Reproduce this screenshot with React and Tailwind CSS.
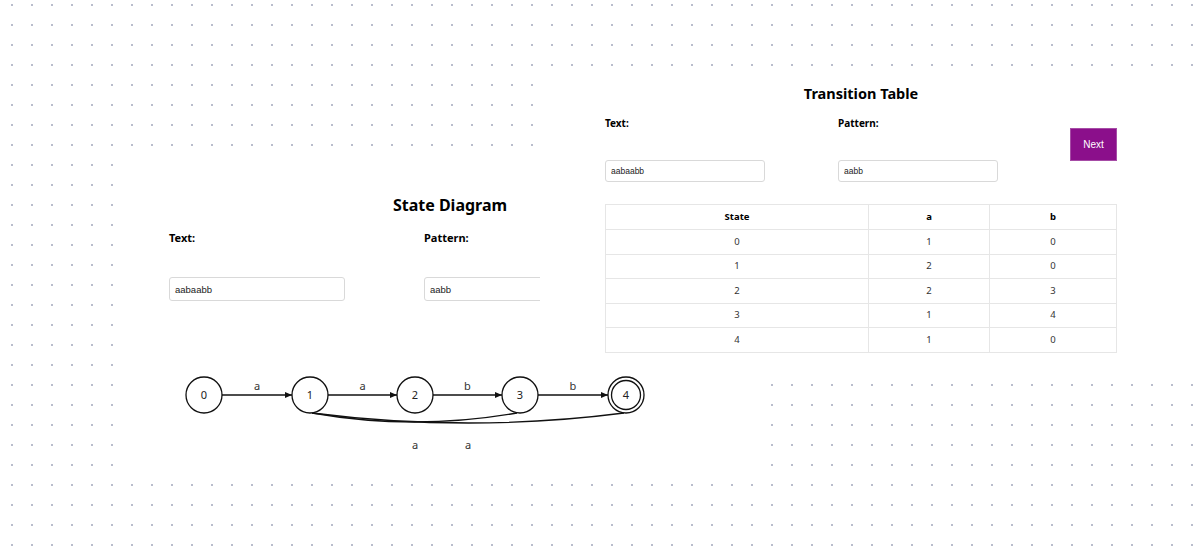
import React from "react";

const rows = [
  { state: 0, a: 1, b: 0 },
  { state: 1, a: 2, b: 0 },
  { state: 2, a: 2, b: 3 },
  { state: 3, a: 1, b: 4 },
  { state: 4, a: 1, b: 0 },
];

const nodes = [76, 182, 287, 392, 498];
const edgeLabels = ["a", "a", "b", "b"];

function StateDiagram() {
  return (
    <svg width="642" height="100" viewBox="0 0 642 100" className="block">
      <defs>
        <marker id="arrow" markerWidth="7" markerHeight="6" refX="7" refY="3" orient="auto" markerUnits="userSpaceOnUse">
          <path d="M0,0 L7,3 L0,6 Z" fill="#111" />
        </marker>
      </defs>
      {nodes.slice(0, -1).map((x, i) => (
        <line key={i} x1={x + 18} y1="35" x2={nodes[i + 1] - 18} y2="35" stroke="#111" strokeWidth="1.3" markerEnd="url(#arrow)" />
      ))}
      <path d="M389,53 Q287,71 184,53" fill="none" stroke="#111" strokeWidth="1.3" />
      <path d="M496,53 Q341,73 184,53" fill="none" stroke="#111" strokeWidth="1.3" />
      {nodes.map((x, i) => (
        <g key={i}>
          <circle cx={x} cy="35" r="18" fill="white" stroke="#111" strokeWidth="1.3" />
          {i === 4 && <circle cx={x} cy="35" r="14.5" fill="none" stroke="#111" strokeWidth="1.3" />}
          <text x={x} y="39" textAnchor="middle" fontSize="11" fill="#222" fontFamily="'Noto Sans', sans-serif">
            {i}
          </text>
        </g>
      ))}
      {edgeLabels.map((l, i) => (
        <text key={i} x={(nodes[i] + nodes[i + 1]) / 2} y="30" textAnchor="middle" fontSize="11" fill="#333" fontFamily="'Noto Sans', sans-serif">
          {l}
        </text>
      ))}
      <text x="287" y="89" textAnchor="middle" fontSize="11" fill="#333" fontFamily="'Noto Sans', sans-serif">a</text>
      <text x="340" y="89" textAnchor="middle" fontSize="11" fill="#333" fontFamily="'Noto Sans', sans-serif">a</text>
    </svg>
  );
}

export default function App() {
  return (
    <div className="min-h-[551px] w-full overflow-hidden bg-white bg-[radial-gradient(circle,#b9bdcc_1px,transparent_1.4px)] bg-[size:20px_20px] bg-[position:2px_15px] pt-[74px] pb-[77px] font-['Noto_Sans',sans-serif] text-black">
      {/* transition table */}
      <section className="relative z-10 ml-[540px] h-[300px] bg-white pl-[65px] pt-[7px]">
        <div className="w-[512px]">
          <h2 className="text-center text-[14.5px] font-bold leading-[24px]">Transition Table</h2>
          <div className="mt-[11px] flex items-start">
            <div className="w-[233px]">
              <label className="block text-[10px] font-bold leading-[14px]">Text:</label>
              <input
                readOnly
                value="aabaabb"
                className="mt-[30px] h-[22px] w-[160px] rounded-[3px] border border-[#d9d9d9] px-[5px] font-['Liberation_Sans',sans-serif] text-[8.5px] text-[#222] outline-none"
              />
            </div>
            <div>
              <label className="block text-[10px] font-bold leading-[14px]">Pattern:</label>
              <input
                readOnly
                value="aabb"
                className="mt-[30px] h-[22px] w-[160px] rounded-[3px] border border-[#d9d9d9] px-[5px] font-['Liberation_Sans',sans-serif] text-[8.5px] text-[#222] outline-none"
              />
            </div>
            <button className="ml-auto mt-[12px] h-[33px] w-[47px] border border-[#a64ca6] bg-[#8b0f8b] font-['Liberation_Sans',sans-serif] text-[10px] text-white">
              Next
            </button>
          </div>
          <table className="mt-[22px] w-[512px] border-collapse text-[9.5px] text-[#333]">
            <thead>
              <tr className="h-[25px]">
                <th className="w-[263px] border border-[#e6e6e6] font-bold text-black">State</th>
                <th className="w-[121px] border border-[#e6e6e6] font-bold text-black">a</th>
                <th className="border border-[#e6e6e6] font-bold text-black">b</th>
              </tr>
            </thead>
            <tbody>
              {rows.map((r) => (
                <tr key={r.state} className="h-[24.5px]">
                  <td className="border border-[#e6e6e6] text-center">{r.state}</td>
                  <td className="border border-[#e6e6e6] text-center">{r.a}</td>
                  <td className="border border-[#e6e6e6] text-center">{r.b}</td>
                </tr>
              ))}
            </tbody>
          </table>
        </div>
      </section>

      {/* state diagram */}
      <section className="-mt-[210px] ml-[128px] h-[310px] w-[642px] bg-white pt-[29px]">
        <div className="ml-[41px] w-[562px]">
          <h2 className="text-center text-[16px] font-bold leading-[24px]">State Diagram</h2>
          <div className="mt-[13px] flex">
            <div className="w-[255px]">
              <label className="block text-[11px] font-bold leading-[15px]">Text:</label>
              <input
                readOnly
                value="aabaabb"
                className="mt-[32px] h-[24px] w-[176px] rounded-[3px] border border-[#d9d9d9] px-[5px] font-['Liberation_Sans',sans-serif] text-[9.5px] text-[#222] outline-none"
              />
            </div>
            <div>
              <label className="block text-[11px] font-bold leading-[15px]">Pattern:</label>
              <input
                readOnly
                value="aabb"
                className="mt-[32px] h-[24px] w-[176px] rounded-[3px] border border-[#d9d9d9] px-[5px] font-['Liberation_Sans',sans-serif] text-[9.5px] text-[#222] outline-none"
              />
            </div>
          </div>
        </div>
        <div className="mt-[59px]">
          <StateDiagram />
        </div>
      </section>
    </div>
  );
}
